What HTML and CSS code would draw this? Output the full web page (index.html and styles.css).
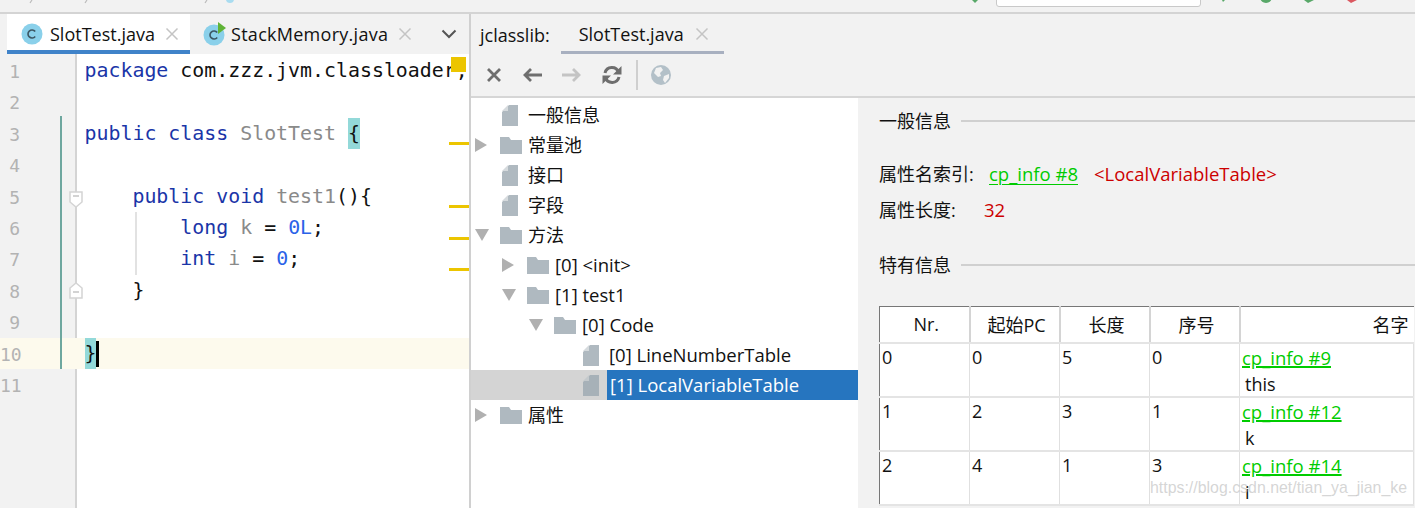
FILE: index.html
```html
<!DOCTYPE html>
<html lang="zh">
<head>
<meta charset="utf-8">
<title>SlotTest.java</title>
<link rel="stylesheet" href="styles.css">
</head>
<body>
<div class="top">
  <svg class="crumbs" width="240" height="4" viewBox="0 0 240 4"><path d="M32 0l-2 3M87 0l-2 3M207 0l-2 3" stroke="#bbb" stroke-width="1.200"/><circle cx="230" cy="-1" r="4" fill="#a9dcf0"/></svg>
  <svg class="ti-first" width="12" height="3" viewBox="0 0 12 3"><path d="M3 0h6L6 3z" fill="#59a869"/></svg>
  <div class="search"></div>
  <div class="top-icons">
    <svg width="15" height="3" viewBox="0 0 15 3"><path d="M6 0h3L7 2z" fill="#59a869"/></svg>
    <svg width="16" height="3" viewBox="0 0 16 3"><circle cx="8" cy="-3" r="6" fill="#59a869"/></svg>
    <svg width="16" height="3" viewBox="0 0 16 3"><path d="M3 0h10L7 3z" fill="#59a869"/></svg>
    <svg width="16" height="3" viewBox="0 0 16 3"><path d="M3 0h10L7 3z" fill="#db5860"/></svg>
  </div>
</div>
<div class="main">
  <section class="editor">
    <div class="tabs">
      <div class="tab tab-active">
        <svg class="cicon" width="22" height="22" viewBox="0 0 22 22"><circle cx="11" cy="11" r="10.500" fill="#8ad0ea"/><path d="M14.200 8.600a4 4 0 1 0 0 4.800" fill="none" stroke="#3c5662" stroke-width="1.600"/></svg>
        <span class="tab-name">SlotTest.java</span>
        <svg class="close" width="14" height="14" viewBox="0 0 14 14"><path d="M1.500 1.500l11 11M12.500 1.500l-11 11" stroke="#c4c4c4" stroke-width="1.500"/></svg>
      </div>
      <div class="tab tab-other">
        <svg class="cicon" width="24" height="24" viewBox="0 0 24 24"><circle cx="11" cy="13" r="10.500" fill="#8ad0ea"/><path d="M14.200 10.600a4 4 0 1 0 0 4.800" fill="none" stroke="#3c5662" stroke-width="1.600"/><path d="M15 0l8 6-8 6z" fill="#5fb336"/></svg>
        <span class="tab-name">StackMemory.java</span>
        <svg class="close" width="14" height="14" viewBox="0 0 14 14"><path d="M1.500 1.500l11 11M12.500 1.500l-11 11" stroke="#c4c4c4" stroke-width="1.500"/></svg>
      </div>
      <svg class="chev" width="16" height="10" viewBox="0 0 16 10"><path d="M1.500 1.500L8 8l6.500-6.500" fill="none" stroke="#555" stroke-width="2"/></svg>
    </div>
    <div class="code">
      <div class="line"><span class="num">1</span><code><b>package</b> com.zzz.jvm.classloader;</code></div>
      <div class="line"><span class="num">2</span><code></code></div>
      <div class="line"><span class="num">3</span><code><b>public class</b> <i>SlotTest</i> <span class="match">{</span></code></div>
      <div class="line"><span class="num">4</span><code></code></div>
      <div class="line"><span class="num">5</span><code>    <b>public void</b> <i>test1</i>(){</code></div>
      <div class="line"><span class="num">6</span><code>        <b>long</b> <i>k</i> = <em>0L</em>;</code></div>
      <div class="line"><span class="num">7</span><code>        <b>int</b> <i>i</i> = <em>0</em>;</code></div>
      <div class="line"><span class="num">8</span><code>    }</code></div>
      <div class="line"><span class="num">9</span><code></code></div>
      <div class="line line-current"><span class="num">10</span><code><span class="match">}</span><span class="caret"></span></code></div>
      <div class="line"><span class="num">11</span><code></code></div>
      <div class="vcs"></div>
      <div class="guide"></div>
      <svg class="fold fold-a" width="14" height="18" viewBox="0 0 14 18"><path d="M1 1h12v10l-6 5-6-5z" fill="#fff" stroke="#d4d4d4" stroke-width="1.500"/><path d="M4 5h6" stroke="#c4c4c4" stroke-width="1.500"/></svg>
      <svg class="fold fold-b" width="14" height="18" viewBox="0 0 14 18"><path d="M1 17h12V7L7 2 1 7z" fill="#fff" stroke="#d4d4d4" stroke-width="1.500"/><path d="M4 11h6" stroke="#c4c4c4" stroke-width="1.500"/></svg>
      <div class="stripe stripe-square"></div>
      <div class="stripe stripe-1"></div>
      <div class="stripe stripe-2"></div>
      <div class="stripe stripe-3"></div>
      <div class="stripe stripe-4"></div>
    </div>
  </section>
  <section class="viewer">
    <div class="vtabs">
      <span class="vlabel">jclasslib:</span>
      <div class="vtab">
        <span>SlotTest.java</span>
        <svg width="14" height="14" viewBox="0 0 14 14"><path d="M1.500 1.500l11 11M12.500 1.500l-11 11" stroke="#c4c4c4" stroke-width="1.500"/></svg>
      </div>
    </div>
    <div class="toolbar">
      <svg width="16" height="16" viewBox="0 0 16 16"><path d="M2 2l12 12M14 2L2 14" stroke="#6e6e6e" stroke-width="2.800"/></svg>
      <svg width="20" height="16" viewBox="0 0 20 16"><path d="M20 8H3M9 2L3 8l6 6" fill="none" stroke="#6e6e6e" stroke-width="2.800"/></svg>
      <svg width="20" height="16" viewBox="0 0 20 16"><path d="M0 8h17M11 2l6 6-6 6" fill="none" stroke="#c4c4c4" stroke-width="2.800"/></svg>
      <svg width="20" height="20" viewBox="0 0 20 20"><path d="M16.500 7.500A7 7 0 0 0 3 8M3.500 12.500A7 7 0 0 0 17 12" fill="none" stroke="#6e6e6e" stroke-width="3"/><path d="M11 9.500h8.500V1zM9 10.500H.5V19z" fill="#6e6e6e"/></svg>
      <span class="tsep"></span>
      <svg width="22" height="22" viewBox="0 0 22 22"><circle cx="11" cy="11" r="10" fill="#b3c0c8"/><path d="M6 4l5-1 2 3-3 3 1 3-3 1-4-4zM14 12l5-2 0 4-4 5-2-3z" fill="#f2f2f2"/></svg>
    </div>
    <div class="panes">
      <div class="tree">
        <div class="row"><span class="indent-0"></span><span class="arrow"></span><svg class="file" width="16" height="22" viewBox="0 0 16 22"><path d="M7 1h9v21H0V8z" fill="#afb9c0"/><path d="M6 1v6H0z" fill="#d5dadd"/></svg><span class="label">一般信息</span></div>
        <div class="row"><span class="indent-0"></span><span class="arrow arrow-r"></span><svg class="folder" width="22" height="18" viewBox="0 0 22 18"><path d="M0 1h9l2 3h11v14H0z" fill="#afb9c0"/></svg><span class="label">常量池</span></div>
        <div class="row"><span class="indent-0"></span><span class="arrow"></span><svg class="file" width="16" height="22" viewBox="0 0 16 22"><path d="M7 1h9v21H0V8z" fill="#afb9c0"/><path d="M6 1v6H0z" fill="#d5dadd"/></svg><span class="label">接口</span></div>
        <div class="row"><span class="indent-0"></span><span class="arrow"></span><svg class="file" width="16" height="22" viewBox="0 0 16 22"><path d="M7 1h9v21H0V8z" fill="#afb9c0"/><path d="M6 1v6H0z" fill="#d5dadd"/></svg><span class="label">字段</span></div>
        <div class="row"><span class="indent-0"></span><span class="arrow arrow-d"></span><svg class="folder" width="22" height="18" viewBox="0 0 22 18"><path d="M0 1h9l2 3h11v14H0z" fill="#afb9c0"/></svg><span class="label">方法</span></div>
        <div class="row"><span class="indent-1"></span><span class="arrow arrow-r"></span><svg class="folder" width="22" height="18" viewBox="0 0 22 18"><path d="M0 1h9l2 3h11v14H0z" fill="#afb9c0"/></svg><span class="label latin">[0] &lt;init&gt;</span></div>
        <div class="row"><span class="indent-1"></span><span class="arrow arrow-d"></span><svg class="folder" width="22" height="18" viewBox="0 0 22 18"><path d="M0 1h9l2 3h11v14H0z" fill="#afb9c0"/></svg><span class="label latin">[1] test1</span></div>
        <div class="row"><span class="indent-2"></span><span class="arrow arrow-d"></span><svg class="folder" width="22" height="18" viewBox="0 0 22 18"><path d="M0 1h9l2 3h11v14H0z" fill="#afb9c0"/></svg><span class="label latin">[0] Code</span></div>
        <div class="row"><span class="indent-3"></span><span class="arrow"></span><svg class="file" width="16" height="22" viewBox="0 0 16 22"><path d="M7 1h9v21H0V8z" fill="#afb9c0"/><path d="M6 1v6H0z" fill="#d5dadd"/></svg><span class="label latin">[0] LineNumberTable</span></div>
        <div class="row row-selected"><span class="indent-3"></span><span class="arrow"></span><svg class="file" width="16" height="22" viewBox="0 0 16 22"><path d="M7 1h9v21H0V8z" fill="#a7b1b8"/><path d="M6 1v6H0z" fill="#c4c9cc"/></svg><span class="label latin">[1] LocalVariableTable</span></div>
        <div class="row"><span class="indent-0"></span><span class="arrow arrow-r"></span><svg class="folder" width="22" height="18" viewBox="0 0 22 18"><path d="M0 1h9l2 3h11v14H0z" fill="#afb9c0"/></svg><span class="label">属性</span></div>
      </div>
      <div class="detail">
        <div class="heading"><span>一般信息</span><hr></div>
        <div class="attrs">
          <div class="attr"><span class="attr-key">属性名索引:</span><a class="link link-loose">cp_info #8</a><span class="red latin">&lt;LocalVariableTable&gt;</span></div>
          <div class="attr"><span class="attr-key attr-key-short">属性长度:</span><span class="red latin">32</span></div>
        </div>
        <div class="heading"><span>特有信息</span><hr></div>
        <table class="grid">
          <thead>
            <tr><th>Nr.</th><th>起始PC</th><th>长度</th><th>序号</th><th class="wide">名字</th></tr>
          </thead>
          <tbody>
            <tr><td>0</td><td>0</td><td>5</td><td>0</td><td><a class="link">cp_info #9</a><div class="sub">this</div></td></tr>
            <tr><td>1</td><td>2</td><td>3</td><td>1</td><td><a class="link">cp_info #12</a><div class="sub">k</div></td></tr>
            <tr><td>2</td><td>4</td><td>1</td><td>3</td><td><a class="link">cp_info #14</a><div class="sub">i</div></td></tr>
          </tbody>
        </table>
      </div>
    </div>
  </section>
</div>
<div class="watermark">https://blog.csdn.net/tian_ya_jian_ke</div>
</body>
</html>
```
FILE: styles.css
```css
* { box-sizing: border-box; }
html, body { margin: 0; height: 100%; overflow: hidden; }
body {
  width: 1415px;
  height: 508px;
  background: #f2f2f2;
  color: #111;
  font-family: "Open Sans", "Noto Sans CJK SC", sans-serif;
  font-size: 18px;
  position: relative;
}
svg { flex: none; display: block; }

.top {
  height: 14px;
  display: flex;
  border-bottom: 2px solid #d4d4d4;
  overflow: hidden;
  align-items: flex-start;
}
.crumbs { margin-right: 729px; }
.ti-first { margin-right: 15px; }
.search {
  width: 205px;
  height: 20px;
  margin-top: -13px;
  flex: none;
  background: #fff;
  border: 1px solid #c9c9c9;
  border-radius: 3px;
}
.top-icons { display: flex; gap: 27px; padding-left: 15px; }

.main { display: flex; height: 494px; }

.editor { width: 471px; flex: none; border-right: 2px solid #d0d0d0; }
.tabs {
  height: 40px;
  display: flex;
  padding-left: 7px;
  align-items: stretch;
  position: relative;
}
.tab {
  display: flex;
  align-items: center;
  height: 40px;
  padding: 0 10px 0 13px;
  gap: 7px;
  font-size: 18px;
}
.tab-active { width: 183px; background: #fff; border-bottom: 4px solid #4083c9; padding-top: 4px; padding-left: 14px; }
.tab .close { margin-left: 3px; }
.tab-other { gap: 4px; }
.tab-other .tab-name { letter-spacing: .28px; }
.tab-other .close { margin-left: 6px; }
.chev { position: absolute; left: 441px; top: 15px; }

.code {
  position: relative;
  height: 454px;
  padding-top: 1px;
  background: linear-gradient(to right, #f2f2f2 75px, #d4d4d4 75px 77px, #fff 77px);
  font-family: "DejaVu Sans Mono", monospace;
  font-size: 19.900px;
}
.line { display: flex; height: 31.400px; line-height: 31.400px; }
.num {
  flex: none;
  width: 20px;
  margin-right: 64.500px;
  text-align: right;
  color: #b3b3b3;
  font-size: 18px;
  position: relative;
  top: 1px;
}
.line code { font: inherit; white-space: pre; color: #111; flex: 1; }
.line b { font-weight: 400; color: #1a35a8; }
.line i { font-style: normal; color: #8a8a8a; }
.line em { font-style: normal; color: #2a62e8; }
.match { background: #93d9d9; display: inline-block; height: 31px; }
.line-current { background: #fdfaed; }
.caret { display: inline-block; width: 3px; height: 26px; background: #000; vertical-align: middle; }

.vcs { position: absolute; left: 60px; top: 62px; width: 2px; height: 253px; background: #6ea79f; }
.guide { position: absolute; left: 135px; top: 158px; width: 2px; height: 63px; background: #e2e2e2; }
.fold { position: absolute; left: 69px; }
.fold-a { top: 137px; }
.fold-b { top: 227px; }
.stripe { position: absolute; background: #ecc500; left: 449px; width: 20px; height: 3px; }
.stripe-square { left: 451px; top: 3px; width: 15px; height: 15px; }
.stripe-1 { top: 88px; }
.stripe-2 { top: 151px; }
.stripe-3 { top: 183px; }
.stripe-4 { top: 214px; }

.viewer { flex: 1; min-width: 0; display: flex; flex-direction: column; }
.vtabs { height: 40px; display: flex; align-items: flex-start; padding-left: 9px; }
.vlabel { line-height: 42px; margin-right: 11px; }
.vtab {
  width: 163px;
  height: 40px;
  display: flex;
  align-items: center;
  gap: 11px;
  padding: 2px 0 0 18px;
  border-bottom: 3px solid #a8b0c0;
}
.toolbar {
  height: 44px;
  display: flex;
  align-items: center;
  gap: 20px;
  padding-left: 15px;
  border-bottom: 2px solid #d6d6d6;
}
.tsep { width: 2px; height: 30px; background: #cfcfcf; margin: 0 -8px 0 -6px; }

.panes { flex: 1; display: flex; min-height: 0; }
.tree { width: 387px; flex: none; background: #fff; padding-top: 2px; }
.row { height: 30px; display: flex; align-items: center; }
.indent-0 { width: 4px; }
.indent-1 { width: 31px; }
.indent-2 { width: 58px; }
.indent-3 { width: 85px; }
.arrow { width: 25px; height: 14px; flex: none; position: relative; }
.arrow-r::before {
  content: "";
  position: absolute; left: 0; top: 0;
  border-left: 12px solid #b0b0b0;
  border-top: 7px solid transparent;
  border-bottom: 7px solid transparent;
}
.arrow-d::before {
  content: "";
  position: absolute; left: 0; top: 1px;
  border-top: 12px solid #b0b0b0;
  border-left: 7px solid transparent;
  border-right: 7px solid transparent;
}
.file { margin: 0 10px 0 2px; }
.folder { margin-right: 6px; }
.label { padding: 0 3px 0 0; line-height: 30px; white-space: nowrap; }
.latin { font-size: 18.500px; }
.row-selected { background: #d4d4d4; }
.row-selected .label { background: #2675bf; color: #fff; flex: 1; padding-left: 3px; margin-left: -2px; }

.detail { flex: 1; min-width: 0; padding: 9px 0 0 21px; overflow: hidden; }
.heading { display: flex; align-items: center; gap: 10px; height: 28px; }
.heading span { flex: none; margin-top: -2px; }
.heading hr { flex: 1; height: 2px; border: 0; margin: 0; background: #d0d0d0; }
.attrs { padding: 20px 0 24px; }
.attr { display: flex; height: 36px; align-items: center; }
.attr-key { width: 110px; }
.attr-key-short { width: 105px; }
.link { color: #00cc00; text-decoration: underline; text-decoration-thickness: 2px; font-size: 18.500px; }
.link-loose { margin-right: 16px; text-decoration-thickness: 1px; text-underline-offset: 3px; }
.red { color: #cc0000; }

.grid {
  margin-top: 27px;
  width: 535px;
  border-collapse: collapse;
  table-layout: fixed;
  background: #fff;
  border-top: 1px solid #777;
  border-left: 1px solid #777;
}
.grid th {
  width: 90px;
  height: 36px;
  font-weight: 400;
  text-align: center;
  padding: 0 0 0 4px;
  border-right: 2px solid #d4d4d4;
  border-bottom: 2px solid #e4e4e4;
}
.grid th.wide { width: auto; text-align: right; padding-right: 5px; border-right: 0; }
.grid td {
  height: 53px;
  vertical-align: top;
  padding: 0 2px;
  line-height: 27px;
  border-right: 1px solid #e0e0e0;
  border-bottom: 2px solid #e4e4e4;
}
.grid .link { display: block; line-height: 27px; }
.sub { padding: 1px 0 0 3px; line-height: 24px; }

.watermark {
  position: absolute;
  left: 1150px;
  top: 479px;
  font-family: "Liberation Sans", sans-serif;
  font-size: 15.900px;
  color: rgba(190,190,190,.65);
  white-space: nowrap;
}
```
